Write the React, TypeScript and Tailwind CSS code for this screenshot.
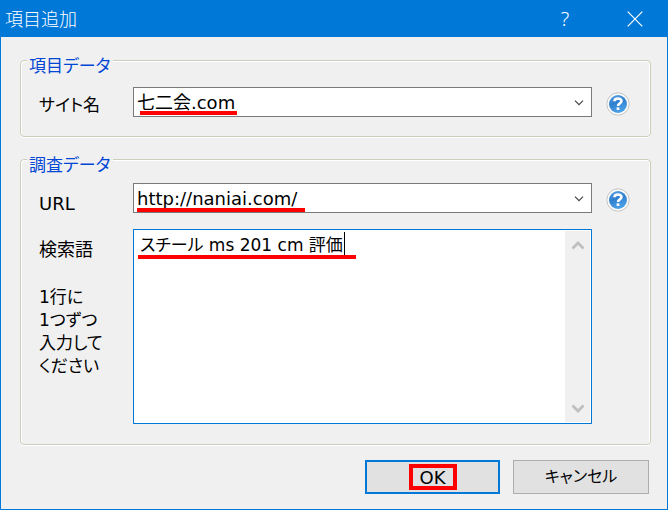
import React, { useId } from "react";

function HelpButton() {
  const id = useId();
  return (
    <button type="button" aria-label="ヘルプ" className="h-6 w-6 shrink-0">
      <svg viewBox="0 0 24 24" className="block h-6 w-6">
        <defs>
          <linearGradient id={id} x1="0" y1="0" x2="0.4" y2="1">
            <stop offset="0" stopColor="#5ba6e4" />
            <stop offset="0.5" stopColor="#2f7fce" />
            <stop offset="1" stopColor="#4ba0e6" />
          </linearGradient>
        </defs>
        <circle cx="12" cy="12" r="11.2" fill="#fafafa" stroke="#c4c4c4" />
        <circle cx="12" cy="12" r="9" fill={`url(#${id})`} />
        <path d="M8.5 9.3C8.5 5.6 15.5 5.6 15.5 9.1C15.5 11.5 12 11.3 12 14.1" fill="none" stroke="#fff" strokeWidth="2.6" />
        <rect x="10.6" y="15.4" width="2.8" height="2.5" fill="#fff" />
      </svg>
    </button>
  );
}

function Combo({ id, value, mark }: { id: string; value: string; mark: string }) {
  return (
    <div className="relative min-w-0 flex-1">
      <select
        id={id}
        defaultValue={value}
        className="block h-[30px] w-full appearance-none rounded-none border border-[#7a7a7a] bg-white pr-6 pl-[3px] text-[18px] outline-none"
      >
        <option>{value}</option>
      </select>
      <svg viewBox="0 0 10 6" className="pointer-events-none absolute top-[13px] right-2 h-1.5 w-2.5" fill="none" stroke="#444" strokeWidth="1.2">
        <path d="M1 .7L5 4.7L9 .7" />
      </svg>
      <span className={`pointer-events-none absolute h-1 bg-[#ff0000] ${mark}`} />
    </div>
  );
}

function Group({ title, children, className }: { title: string; children: React.ReactNode; className: string }) {
  return (
    <fieldset
      className={`min-w-0 rounded-[4px] border border-[#cdcdb9] pr-5 pl-[18px] shadow-[inset_1px_1px_0_#fff,inset_-1px_0_0_#fff,0_1px_0_#fff] ${className}`}
    >
      <legend className="-ml-3 bg-[#f0f0f0] px-0.5 pt-3 text-[17px] leading-[14px] text-[#0046d5]">{title}</legend>
      {children}
    </fieldset>
  );
}

export default function App() {
  return (
    <div
      lang="ja"
      className="flex min-h-screen flex-col border border-t-0 border-[#0078d7] bg-[#f0f0f0] font-['DejaVu_Sans','Noto_Sans_CJK_JP',sans-serif] text-[18px] text-black [font-feature-settings:'palt']"
    >
      <header className="flex h-[37px] items-center bg-[#0078d7] pl-1 text-white">
        <h1 className="flex-1 pt-0.5 text-[18px] leading-6 font-light">項目追加</h1>
        <button type="button" aria-label="ヘルプ" className="flex h-full w-[76px] items-center justify-center font-['Noto_Sans',sans-serif] text-[20px] font-light">
          ?
        </button>
        <button type="button" aria-label="閉じる" className="flex h-full w-16 items-center justify-center">
          <svg viewBox="0 0 16 16" className="h-4 w-4" stroke="#fff" strokeWidth="1.2">
            <path d="M.7 .7L15.3 15.3M15.3 .7L.7 15.3" />
          </svg>
        </button>
      </header>

      <form className="flex flex-1 flex-col pt-2.5 pr-4 pb-[15px] pl-[19px]" onSubmit={(e) => e.preventDefault()}>
        <Group title="項目データ" className="pt-3.5 pb-[19px]">
          <div className="flex items-center">
            <label htmlFor="site" className="w-[94px] shrink-0 pt-1.5 text-[17px] leading-6">サイト名</label>
            <Combo id="site" value="七二会.com" mark="top-6 left-[7px] w-[97px]" />
            <div className="ml-3.5 flex pt-1"><HelpButton /></div>
          </div>
        </Group>

        <Group title="調査データ" className="mt-[9px] flex-1 pt-[11px] pb-5">
          <div className="flex items-center">
            <label htmlFor="url" className="w-[94px] shrink-0 pt-3 leading-[18px]">URL</label>
            <Combo id="url" value="http://naniai.com/" mark="top-[25px] left-1 w-[168px]" />
            <div className="ml-3.5 flex pt-1"><HelpButton /></div>
          </div>

          <div className="mt-4 flex pr-[38px]">
            <label htmlFor="words" className="w-[94px] shrink-0 pt-[9px] leading-6">
              検索語
              <span className="mt-6 block text-[17px] leading-[23px]">
                1行に<br />1つずつ<br />入力して<br />ください
              </span>
            </label>
            <div className="relative flex h-[195px] min-w-0 flex-1 border border-[#0078d7] bg-white">
              <textarea
                id="words"
                defaultValue="スチール ms 201 cm 評価"
                className="block min-w-0 flex-1 resize-none overflow-hidden bg-transparent pt-[3px] pl-1.5 text-[17px] leading-6 outline-none"
              />
              <div className="my-px mr-px flex w-[25px] flex-col justify-between bg-[#f0f0f0]">
                <button type="button" aria-label="上へ" className="flex h-7 items-center justify-center">
                  <svg viewBox="0 0 12 9" className="h-[9px] w-3" fill="none" stroke="#bfbfbf" strokeWidth="2.8">
                    <path d="M.5 7.5L6 2L11.5 7.5" />
                  </svg>
                </button>
                <button type="button" aria-label="下へ" className="flex h-7 items-center justify-center">
                  <svg viewBox="0 0 12 9" className="h-[9px] w-3" fill="none" stroke="#bfbfbf" strokeWidth="2.8">
                    <path d="M.5 1.5L6 7L11.5 1.5" />
                  </svg>
                </button>
              </div>
              <span className="pointer-events-none absolute top-[25px] left-1 h-1 w-[218px] bg-[#ff0000]" />
              <span className="pointer-events-none absolute top-0.5 left-[210px] h-[23px] w-px bg-black" />
            </div>
          </div>
        </Group>

        <div className="mt-[15px] flex justify-end gap-[13px] pr-0.5">
          <button type="submit" className="flex h-[34px] w-[135px] items-center justify-center border-2 border-[#0078d7] bg-[#e1e1e1]">
            <span className="flex h-[26px] w-12 items-center justify-center border-4 border-[#ff0000]">OK</span>
          </button>
          <button type="button" className="h-[34px] w-[136px] border border-[#adadad] bg-[#e1e1e1] text-[16px]">
            キャンセル
          </button>
        </div>
      </form>
    </div>
  );
}
